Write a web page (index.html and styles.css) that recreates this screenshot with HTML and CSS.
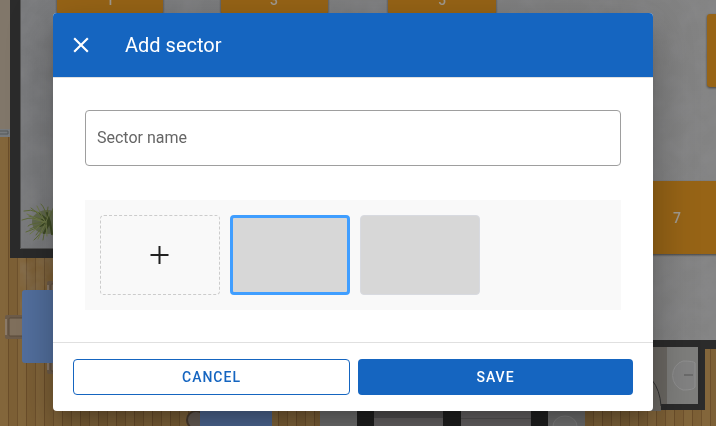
FILE: index.html
```html
<!DOCTYPE html>
<html lang="en">
<head>
<meta charset="utf-8">
<meta name="viewport" content="width=device-width, initial-scale=1">
<title>Add sector</title>
<link rel="stylesheet" href="styles.css">
</head>
<body>
<svg class="plan" viewBox="0 0 716 426" preserveAspectRatio="xMidYMin slice" aria-hidden="true">
  <defs>
    <pattern id="wood" width="18" height="426" patternUnits="userSpaceOnUse">
      <rect width="18" height="426" fill="#7d6036"/>
      <rect width="9" height="426" fill="#83663b"/>
      <rect x="8" width="1" height="426" fill="#6b4e2a"/>
      <rect x="17" width="1" height="426" fill="#6f522d"/>
    </pattern>
    <linearGradient id="concrete">
      <stop offset="0" stop-color="#7a7b7d"/>
      <stop offset="1" stop-color="#838383"/>
    </linearGradient>
    <filter id="mottle" x="0" y="0" width="100%" height="100%">
      <feTurbulence type="fractalNoise" baseFrequency="0.05" numOctaves="4" seed="4"/>
      <feColorMatrix values="0 0 0 0 0.3  0 0 0 0 0.3  0 0 0 0 0.32  0.4 0 0 0 -0.13"/>
    </filter>
    <g id="chair">
      <rect width="18" height="24" rx="2" fill="#6d5c4a"/>
      <rect x="4" y="3" width="14" height="18" rx="1" fill="#80705d" stroke="#5b4b3b"/>
      <path d="M1 4v16" stroke="#8b7a68" stroke-width="2"/>
    </g>
  </defs>
  <rect width="716" height="426" fill="url(#wood)"/>
  <rect width="10" height="133" fill="#81776a"/>
  <path d="M0 129h10v8H0z" fill="#777a7d"/>
  <path d="M0 131h8v3H0" fill="none" stroke="#54585b"/>
  <path id="floor" d="M20 0h696v340H60V250H20z" fill="url(#concrete)"/>
  <path d="M20 0h696v340H60V250H20z" filter="url(#mottle)"/>
  <path d="M10 0h10v249h40v9H10z" fill="#2b2b2b"/>
  <path d="M20.500 0v248.500H60" fill="none" stroke="#555"/>
  <g fill="none" stroke-linecap="round">
    <ellipse cx="47" cy="222" rx="15" ry="12" fill="#59633c" opacity="0.7"/>
    <path stroke="#5f6b3a" d="M48 222Q38 207 24 211M48 222Q34 215 22 220M48 222Q36 229 26 232M48 222Q40 235 34 240M48 222Q45 207 41 204M48 222Q53 209 54 206M48 222L55 240M48 222Q30 223 28 226M46 220L31 208M46 220L29 216M46 222L30 229M46 222L43 240M46 222L36 235M46 222L48 207"/>
    <path stroke="#3f4b26" stroke-width="2" d="M50 222L40 214M50 222L40 226M50 222L44 233M50 222L47 213M50 222L42 220M50 222L52 234"/>
    <path stroke="#707b49" d="M44 222L27 214M44 222L30 234M44 220L37 206M45 224L38 239M46 222L33 219M46 222L36 211M46 222L50 211M46 222L47 236"/>
  </g>
  <use href="#chair" x="5" y="315"/>
  <use href="#chair" x="47" y="281"/>
  <use href="#chair" x="47" y="350"/>
  <rect x="22" y="290" width="80" height="73" rx="3" fill="#53709f"/>
  <circle cx="196" cy="420" r="9" fill="#6a6058" stroke="#4b3c2d" stroke-width="2"/>
  <rect x="200" y="390" width="72" height="36" fill="#4f6996"/>
  <rect x="320" y="400" width="38" height="26" fill="#717171"/>
  <rect x="357" y="400" width="191" height="26" fill="#202020"/>
  <path d="M374 400h69v26h-69zM461 400h70v26h-70z" fill="#686566"/>
  <path d="M374 400h69v18h-69z" fill="#535152"/>
  <path d="M461 418.500h70" stroke="#585657"/>
  <rect x="548" y="400" width="37" height="26" fill="#717171"/>
  <ellipse cx="565" cy="426" rx="12" ry="10" fill="#777" stroke="#858585"/>
  <path d="M640 340h76v9h-11v61h-44v-6h37v-57h-58z" fill="#2b2b2b"/>
  <rect x="640" y="347" width="27" height="57" fill="#6b6863"/>
  <rect x="640" y="404" width="21" height="7" fill="#6b6863"/>
  <rect x="667" y="347" width="31" height="57" fill="#7e7e7c"/>
  <path d="M652 380Q660 390 661 406" fill="none" stroke="#333"/>
  <path d="M695 363v24q-1 3-12 3a14 15 0 0 1 0-29q11 0 12 2z" fill="#828282" stroke="#909090"/>
  <path d="M684 375h9" stroke="#555"/>
  <g class="plan__tables">
    <rect x="57" y="-60" width="106" height="74" rx="3"/>
    <rect x="221" y="-60" width="107" height="74" rx="3"/>
    <rect x="388" y="-60" width="108" height="74" rx="3"/>
    <rect x="707" y="14" width="100" height="73" rx="3"/>
    <rect x="620" y="181" width="110" height="73" rx="3"/>
  </g>
  <g class="plan__numbers">
    <text x="110" y="5">1</text>
    <text x="274" y="5">3</text>
    <text x="442" y="5">5</text>
    <text x="677" y="223">7</text>
  </g>
</svg>

<form class="dialog" role="dialog" aria-labelledby="dialog-title">
  <header class="dialog__header">
    <button class="dialog__close" type="button" aria-label="Close">
      <svg viewBox="0 0 24 24" aria-hidden="true"><path d="M19 6.410L17.590 5 12 10.590 6.410 5 5 6.410 10.590 12 5 17.590 6.410 19 12 13.410 17.590 19 19 17.590 13.410 12z"/></svg>
    </button>
    <h1 class="dialog__title" id="dialog-title">Add sector</h1>
  </header>
  <div class="dialog__body">
    <div class="field">
      <label class="field__label" for="sector-name">Sector name</label>
      <input class="field__input" id="sector-name" type="text">
    </div>
    <div class="picker">
      <button class="picker__item picker__item--add" type="button" aria-label="Add image">
        <svg viewBox="0 0 24 24" aria-hidden="true"><path d="M11.500 3v18M2.500 12h18"/></svg>
      </button>
      <button class="picker__item picker__item--selected" type="button" aria-label="Image 1" aria-pressed="true"></button>
      <button class="picker__item" type="button" aria-label="Image 2" aria-pressed="false"></button>
    </div>
  </div>
  <footer class="dialog__footer">
    <button class="button button--outlined" type="button">CANCEL</button>
    <button class="button button--filled" type="submit">SAVE</button>
  </footer>
</form>
</body>
</html>
```

FILE: styles.css
```css
* {
  box-sizing: border-box;
}

body {
  margin: 0;
  min-height: 100vh;
  padding: 13px 34px 15px 24px;
  overflow: hidden;
  font-family: Roboto, "Liberation Sans", sans-serif;
  background: #7c5f36;
}

button,
input {
  font: inherit;
}

.plan {
  position: fixed;
  inset: 0;
  z-index: -1;
  width: 100%;
  height: 100%;
}

.plan__tables {
  fill: #976416;
  filter: drop-shadow(0 1px 1px rgba(0, 0, 0, 0.5));
}

.plan__numbers {
  fill: #a09a90;
  font-size: 14px;
  font-weight: 500;
  text-anchor: middle;
}

.dialog {
  max-width: 600px;
  margin: 0 auto;
  overflow: hidden;
  border-radius: 4px;
  background: #fff;
  box-shadow: 0 11px 15px -7px rgba(0, 0, 0, 0.2),
    0 24px 38px 3px rgba(0, 0, 0, 0.14), 0 9px 46px 8px rgba(0, 0, 0, 0.12);
}

.dialog__header {
  display: flex;
  align-items: center;
  gap: 20px;
  height: 64px;
  padding: 0 4px;
  color: #fff;
  background: #1565c0;
}

.dialog__close {
  display: grid;
  place-items: center;
  width: 48px;
  height: 48px;
  padding: 0;
  border: 0;
  color: inherit;
  background: none;
}

.dialog__close svg {
  width: 26px;
  fill: currentColor;
}

.dialog__title {
  margin: 0;
  font-size: 20px;
  font-weight: 400;
  line-height: 24px;
}

.dialog__body {
  display: grid;
  gap: 34px;
  padding: 32px;
  border-top: 1px solid #e0e0e0;
  border-bottom: 1px solid #e0e0e0;
}

.field {
  position: relative;
}

.field__label {
  position: absolute;
  top: 16px;
  left: 12px;
  color: #666;
  font-size: 16px;
  line-height: 24px;
}

.field__input {
  display: block;
  width: 100%;
  height: 56px;
  padding: 0 12px;
  border: 1px solid #9e9e9e;
  border-radius: 4px;
  background: none;
}

.picker {
  display: flex;
  flex-wrap: wrap;
  gap: 10px;
  padding: 15px;
  background: #f9f9f9;
}

.picker__item {
  display: grid;
  place-items: center;
  width: 120px;
  height: 80px;
  padding: 0;
  border: 1px solid #d8dae0;
  border-radius: 4px;
  background: #d7d7d7;
}

.picker__item--add {
  border: 1px dashed #ccc;
  background: none;
}

.picker__item--add svg {
  width: 24px;
  stroke: #212121;
  stroke-width: 2;
}

.picker__item--selected {
  border: 3px solid #409eff;
}

.dialog__footer {
  display: flex;
  gap: 8px;
  padding: 16px 20px;
}

.button {
  flex: 1 1 0;
  height: 36px;
  padding: 0 16px;
  border: 0;
  border-radius: 4px;
  font-size: 14px;
  font-weight: 500;
  letter-spacing: 1px;
}

.button--outlined {
  border: 1px solid #1565c0;
  color: #1565c0;
  background: #fff;
}

.button--filled {
  color: #fff;
  background: #1565c0;
}
```
